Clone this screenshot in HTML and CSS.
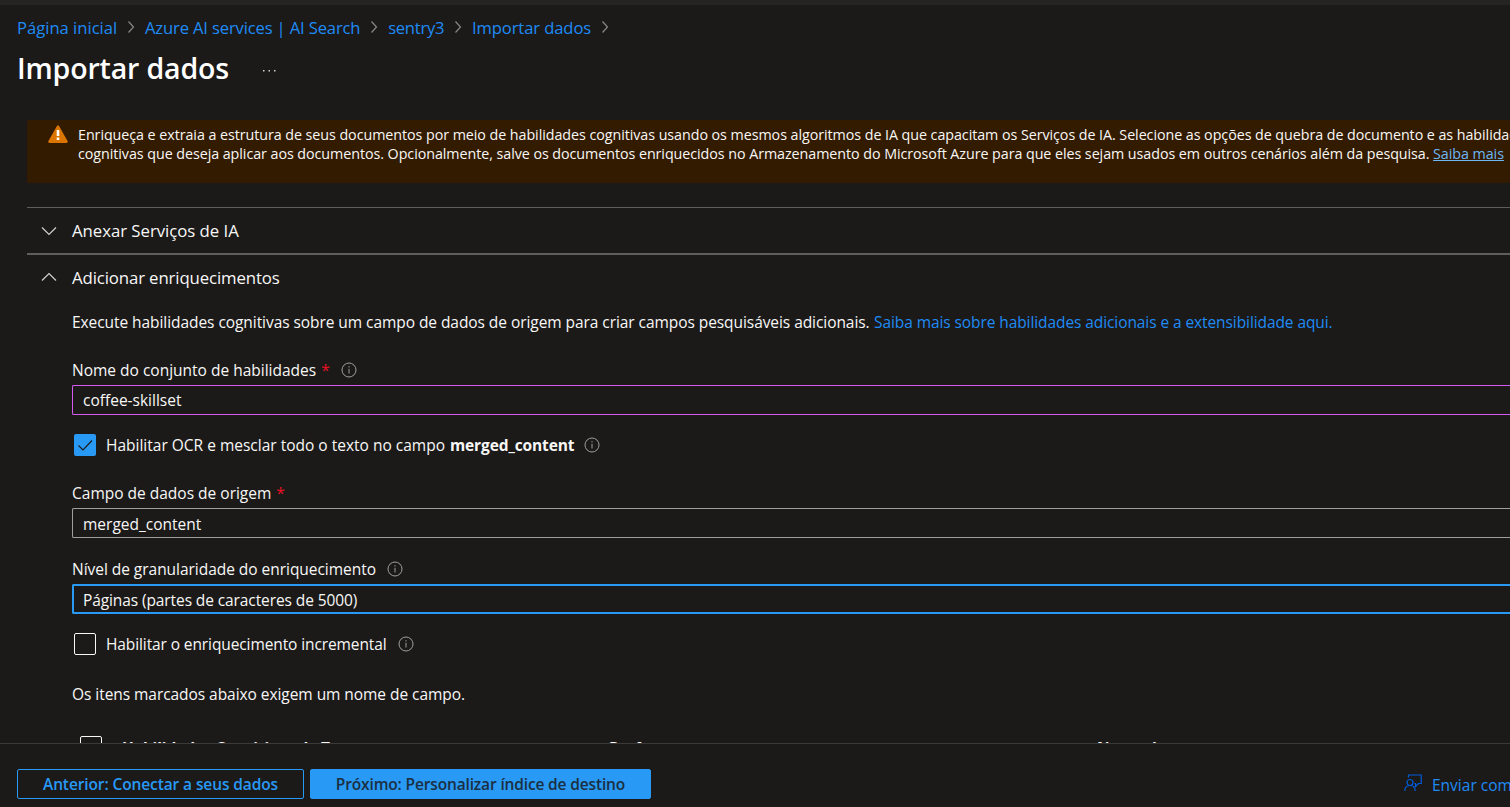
FILE: index.html
```html
<!DOCTYPE html>
<html lang="pt-BR">
<head>
<meta charset="utf-8">
<title>Importar dados</title>
<link rel="stylesheet" href="styles.css">
</head>
<body>
<svg class="defs" width="0" height="0">
  <symbol id="sep" viewBox="0 0 8 14"><path d="M1.500 1.500 6.500 7l-5 5.500"/></symbol>
  <symbol id="info" viewBox="0 0 16 16"><circle cx="8" cy="8" r="7"/><path d="M8 6.800v4.700M8 4.200v1.300"/></symbol>
</svg>
<div class="page">
  <div class="strip"></div>
  <nav class="breadcrumb">
    <a class="b1">Página inicial</a><svg class="sep"><use href="#sep"/></svg>
    <a class="b2">Azure AI services | AI Search</a><svg class="sep"><use href="#sep"/></svg>
    <a class="b3">sentry3</a><svg class="sep"><use href="#sep"/></svg>
    <a class="b4">Importar dados</a><svg class="sep"><use href="#sep"/></svg>
  </nav>
  <header class="title-row">
    <h1>Importar dados</h1>
    <svg class="more" viewBox="0 0 16 4"><path d="M1 1h1.500v1.500H1zM6.500 1H8v1.500H6.500zM12 1h1.500v1.500H12z"/></svg>
  </header>
  <main class="content">
    <section class="banner">
      <svg class="warn" viewBox="0 0 20 18"><path class="tri" d="M9.100.8Q10-.5 10.900.8L19.700 16.300Q20 18 18.600 18H1.400Q0 18 .3 16.300z"/><path class="bang" d="M8.700 5h2.600v6H8.700zM8.700 12.500h2.600V15H8.700z"/></svg>
      <p>Enriqueça e extraia a estrutura de seus documentos por meio de habilidades cognitivas usando os mesmos algoritmos de IA que capacitam os Serviços de IA. Selecione as opções de quebra de documento e as habilidades<br>cognitivas que deseja aplicar aos documentos. Opcionalmente, salve os documentos enriquecidos no Armazenamento do Microsoft Azure para que eles sejam usados em outros cenários além da pesquisa. <a class="more-link">Saiba mais</a></p>
    </section>
    <div class="accordion first">
      <svg class="chev" viewBox="0 0 16 10"><path d="M1 1.500l7 7 7-7"/></svg><span class="a1">Anexar Serviços de IA</span>
    </div>
    <div class="accordion second">
      <svg class="chev" viewBox="0 0 16 10"><path d="M1 8.500l7-7 7 7"/></svg><span class="a2">Adicionar enriquecimentos</span>
    </div>
    <div class="form">
      <p class="intro">Execute habilidades cognitivas sobre um campo de dados de origem para criar campos pesquisáveis adicionais. <a>Saiba mais sobre habilidades adicionais e a extensibilidade aqui.</a></p>
      <div class="label"><span>Nome do conjunto de habilidades</span><span class="req">*</span><svg class="info"><use href="#info"/></svg></div>
      <div class="field edited"><span>coffee-skillset</span></div>
      <div class="check ocr"><span class="box checked"><svg viewBox="0 0 22 22"><path d="M4.500 11.500l4.500 4.500 9-9.500"/></svg></span><span>Habilitar OCR e mesclar todo o texto no campo</span><b class="target">merged_content</b><svg class="info"><use href="#info"/></svg></div>
      <div class="label source"><span>Campo de dados de origem</span><span class="req">*</span></div>
      <div class="field select"><span>merged_content</span></div>
      <div class="label level"><span class="level-text">Nível de granularidade do enriquecimento</span><svg class="info"><use href="#info"/></svg></div>
      <div class="field select focused"><span class="pages">Páginas (partes de caracteres de 5000)</span></div>
      <div class="check inc"><span class="box"></span><span class="inc-text">Habilitar o enriquecimento incremental</span><svg class="info"><use href="#info"/></svg></div>
      <p class="note">Os itens marcados abaixo exigem um nome de campo.</p>
      <div class="thead"><span class="box"></span><b>Habilidades Cognitivas de Texto</b><b>Parâmetro</b><b>Nome do campo</b></div>
    </div>
  </main>
  <footer>
    <button class="btn prev">Anterior: Conectar a seus dados</button>
    <button class="btn next">Próximo: Personalizar índice de destino</button>
    <a class="feedback"><svg viewBox="0 0 18 18"><circle cx="6" cy="8.500" r="3"/><path d="M.8 17c0-3.500 2.200-5.500 5.200-5.500s5.200 2 5.200 5.500M4.500 3.500V1h12.700v8.500h-2.700l-3 3v-3h-1"/></svg><span>Enviar comentários</span></a>
  </footer>
</div>
</body>
</html>
```
FILE: styles.css
```css
* { box-sizing: border-box; }
body { margin: 0; background: #1b1a19; color: #f8f7f6; font-family: "Open Sans", "Noto Sans", sans-serif; font-size: 15.5px; overflow: hidden; }
h1, p { margin: 0; }
.defs { position: absolute; }
svg { fill: none; flex: none; }
.page { height: 807px; display: flex; flex-direction: column; white-space: nowrap; overflow: hidden; }
.strip { height: 5px; background: #252423; flex: none; }
.breadcrumb { display: flex; align-items: center; height: 44px; padding-left: 17px; font-size: 16.6px; flex: none; }
a { color: #2899f5; }
.breadcrumb a { color: #1f8bf5; }
.b2 { letter-spacing: -.15px; }
.b3 { letter-spacing: -.27px; }
.b4 { letter-spacing: -.1px; }
.sep { width: 8px; height: 14px; margin: 0 10px 0 9.8px; stroke: #8a8886; stroke-width: 1.2; }
.title-row { display: flex; align-items: center; height: 38px; padding-left: 17px; flex: none; }
h1 { font-size: 28.5px; font-weight: 600; color: #fff; letter-spacing: -.15px; }
.more { width: 16px; height: 4px; fill: #d2d0ce; margin: 6px 0 0 33px; }
.content { flex: 1; min-height: 0; overflow: hidden; padding: 33px 0 0 27px; }
.banner { display: flex; height: 63px; background: #331b00; padding: 5px 0 0 21px; border-radius: 2px; font-size: 14.3px; line-height: 19px; letter-spacing: -.06px; }
.warn { width: 20px; height: 18px; margin-right: 10px; }
.tri { fill: #db7500; }
.bang { fill: #fff; }
.more-link { color: #6cb8f6; text-decoration: underline; }
.accordion { display: flex; align-items: center; font-size: 16.8px; padding-left: 14px; }
.accordion.first { margin-top: 24px; height: 46px; border-top: 1px solid #605e5c; }
.accordion.second { height: 48px; border-top: 2px solid #605e5c; padding-bottom: 2px; }
.a1 { letter-spacing: -.04px; }
.a2 { letter-spacing: -.12px; }
.chev { width: 16px; height: 10px; margin-right: 15px; stroke: #d2d0ce; stroke-width: 1.2; }
.form { padding-left: 45px; }
.intro { height: 42px; line-height: 43px; letter-spacing: -.063px; }
.intro a { color: #1f8bf5; letter-spacing: -.088px; margin-left: .5px; }
.label { display: flex; align-items: center; height: 32px; margin-top: 10px; padding-top: 2px; }
.req { color: #e81123; margin-left: 5px; }
.info { width: 16px; height: 16px; stroke: #a19f9d; stroke-width: 1; margin-left: 11px; }
.field { display: flex; align-items: center; height: 30px; padding-left: 10px; border: 1px solid #a19f9d; border-right: 0; border-radius: 2px 0 0 2px; }
.field.select { padding-top: 2px; }
.field.edited { border-color: #d65af2; }
.field.focused { border: 2px solid #2899f5; border-right: 0; padding-left: 9px; }
.check { display: flex; align-items: center; height: 22px; padding-left: 2px; }
.ocr { margin-top: 19px; }
.box { width: 22px; height: 22px; border: 1px solid #f8f7f6; border-radius: 2px; margin-right: 10px; flex: none; }
.box.checked { background: #2899f5; border: 0; }
.box svg { display: block; width: 22px; height: 22px; stroke: #1b1a19; stroke-width: 1.1; }
.target { margin-left: 5px; letter-spacing: -.12px; }
.ocr .info { margin-left: 10px; }
.source { margin-top: 20px; }
.level { margin-top: 14px; }
.level-text { letter-spacing: -.035px; }
.pages { letter-spacing: -.1px; }
.inc-text { letter-spacing: -.105px; }
.inc { margin-top: 19px; }
.note { height: 38px; line-height: 37px; margin-top: 21px; letter-spacing: -.055px; }
.thead { display: grid; grid-template-columns: 42px 487px 488px auto; margin-top: 22px; padding-left: 8px; }
.thead b { padding-top: 1px; letter-spacing: -.14px; }
footer { display: flex; flex: none; height: 64px; border-top: 1px solid #3b3a39; padding: 25px 0 0 17px; }
.btn { height: 30px; font: 600 15.5px "Open Sans", sans-serif; letter-spacing: -.11px; border: 1px solid #2899f5; border-radius: 2px; background: none; color: #2899f5; padding: 0; flex: none; }
.prev { width: 287px; margin-right: 6px; }
.next { width: 341px; background: #2899f5; color: #1b2f42; letter-spacing: -.15px; }
.feedback { display: flex; align-items: center; height: 32px; margin-left: 753px; color: #1f8bf5; }
.feedback svg { width: 18px; height: 18px; stroke: #015cda; stroke-width: 1.2; margin: -4px 10px 0 0; }
```
